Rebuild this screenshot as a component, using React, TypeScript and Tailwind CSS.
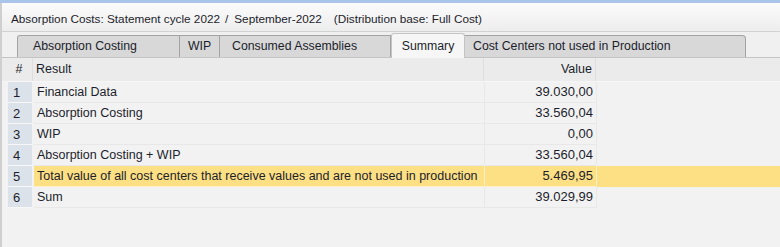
import React from "react";

const rows = [
  { n: "1", r: "Financial Data", v: "39.030,00" },
  { n: "2", r: "Absorption Costing", v: "33.560,04" },
  { n: "3", r: "WIP", v: "0,00" },
  { n: "4", r: "Absorption Costing + WIP", v: "33.560,04" },
  { n: "5", r: "Total value of all cost centers that receive values and are not used in production", v: "5.469,95", hl: true },
  { n: "6", r: "Sum", v: "39.029,99" },
];

export default function App() {
  return (
    <div
      className="w-[780px] h-[247px] bg-[#f2f2f2] overflow-hidden flex flex-col text-[12px] text-[#1c1e2c]"
      style={{ fontFamily: '"Liberation Sans", Arial, sans-serif' }}
    >
      <div className="h-[3px] bg-[#a9c6ea]" />
      <div className="h-[29px] flex items-center pl-[9px] pt-[4px] text-[11.75px] bg-gradient-to-b from-[#fbfbfb] to-[#ededed] border-b border-[#d2d2d2] border-l-2 border-l-[#cfcfcf]">
        <span>Absorption Costs: Statement cycle 2022</span>
        <span className="ml-[5px]">/</span>
        <span className="ml-[6px]">September-2022</span>
        <span className="ml-[12px]">(Distribution base: Full Cost)</span>
      </div>
      <div className="flex-1 flex flex-col border-l-2 border-[#cfcfcf]">
        <div className="h-[26px] flex items-end pl-[15px] border-b border-[#c4c4c4] bg-[#f0f0f0] text-[12.3px]">
          <div className="w-[163px] h-[22px] bg-[#d8d8d8] border border-b-0 border-[#a3a3a3] rounded-tl-[3px] flex items-center pl-[15px]">Absorption Costing</div>
          <div className="w-[40px] h-[22px] bg-[#d8d8d8] border border-b-0 border-l-0 border-[#a3a3a3] flex items-center justify-center">WIP</div>
          <div className="w-[171px] h-[22px] bg-[#d8d8d8] border border-b-0 border-l-0 border-[#a3a3a3] flex items-center pl-[12px]">Consumed Assemblies</div>
          <div className="w-[74px] h-[25px] bg-[#f6f6f6] border border-b-0 border-[#c4c4c4] rounded-t-[3px] flex items-center justify-center -mb-px">Summary</div>
          <div className="w-[281px] h-[22px] bg-[#d8d8d8] border border-b-0 border-l-0 border-[#a3a3a3] rounded-tr-[4px] flex items-center pl-[8px]">Cost Centers not used in Production</div>
        </div>
        <div className="flex h-[24px] bg-[#ebebeb] border-b border-[#f6f6f6] text-[12.5px]">
          <div className="w-[31px] flex items-center justify-center pl-[4px] border-r border-[#dedede]">#</div>
          <div className="w-[451px] flex items-center pl-[3px] border-r border-[#dedede]">Result</div>
          <div className="w-[112px] flex items-center justify-end pr-[3px] border-r border-[#dedede]">Value</div>
          <div className="flex-1" />
        </div>
        {rows.map((row) => (
          <div key={row.n} className="flex h-[21px] text-[12.5px]">
            <div className="w-[6px]" />
            <div className="w-[24px] flex items-center pl-[5px] pt-[2px] bg-[#dce2e9] border-b border-[#f7f7f7] text-[13px]">{row.n}</div>
            <div className="w-[2px]" />
            <div className={`w-[451px] flex items-center pl-[3px] border-r border-b ${row.hl ? "bg-[#fddf84] border-[#fdf0c8]" : "border-[#e8e8e8]"} whitespace-nowrap overflow-hidden`}>{row.r}</div>
            <div className={`w-[112px] flex items-center justify-end pr-[3px] border-r border-b text-[13px] ${row.hl ? "bg-[#fddf84] border-[#fdf0c8]" : "border-[#e8e8e8]"}`}>{row.v}</div>
            <div className={`flex-1 ${row.hl ? "bg-[#fddf84]" : ""}`} />
          </div>
        ))}
      </div>
    </div>
  );
}
